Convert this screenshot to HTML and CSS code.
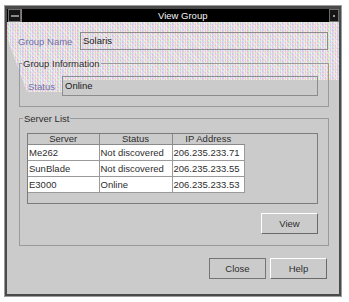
FILE: index.html
```html
<!DOCTYPE html>
<html>
<head>
<meta charset="utf-8">
<link rel="stylesheet" href="styles.css">
</head>
<body>
<div class="window">
  <div class="titlebar">
    <span class="tb-btn menu"><span class="bar"></span></span>
    <span class="sep"></span>
    <span class="title">View Group</span>
    <span class="tb-btn max"><span class="dot"></span></span>
  </div>
  <div class="client">
    <div class="noise"></div>
    <div class="row name-row">
      <label class="lbl name-lbl">Group Name</label>
      <div class="field">Solaris</div>
    </div>
    <fieldset class="box info">
      <legend>Group Information</legend>
      <div class="row status-row">
        <label class="lbl status-lbl">Status</label>
        <div class="field status">Online</div>
      </div>
    </fieldset>
    <fieldset class="box servers">
      <legend>Server List</legend>
      <div class="list">
        <table class="srv">
          <colgroup><col class="c1"><col class="c2"><col class="c3"></colgroup>
          <thead>
            <tr><th>Server</th><th>Status</th><th class="last">IP Address</th></tr>
          </thead>
          <tbody>
            <tr><td>Me262</td><td>Not discovered</td><td>206.235.233.71</td></tr>
            <tr><td>SunBlade</td><td>Not discovered</td><td>206.235.233.55</td></tr>
            <tr><td>E3000</td><td>Online</td><td>206.235.233.53</td></tr>
          </tbody>
        </table>
      </div>
      <div class="view-row"><button class="btn raised">View</button></div>
    </fieldset>
    <div class="actions">
      <button class="btn sunken">Close</button>
      <button class="btn raised">Help</button>
    </div>
  </div>
</div>
</body>
</html>
```
FILE: styles.css
```css
body {
  margin: 0;
  background: #ffffff;
  font-family: "Liberation Sans", Arial, sans-serif;
  font-size: 9.5px;
  color: #2e2e2e;
}

.window {
  margin: 5px 0 0 4px;
  width: 338px;
  height: 292px;
  box-sizing: border-box;
  background: #4a4a4a;
  padding: 4px 3px 3px 3px;
  display: flex;
  flex-direction: column;
  box-shadow: inset 0 0 0 1px #9c9c9c;
}

.titlebar {
  height: 13px;
  background: #000;
  display: flex;
  align-items: center;
  flex: none;
}

.tb-btn {
  box-sizing: border-box;
  height: 13px;
  border: 1px solid #6e6e6e;
  background: #151515;
  display: flex;
  align-items: center;
  justify-content: center;
  flex: none;
}

.menu {
  width: 13px;
  margin-left: 1px;
}

.menu .bar {
  width: 8px;
  height: 2px;
  background: #8a8a8a;
}

.sep {
  width: 1px;
  height: 13px;
  background: repeating-linear-gradient(0deg, #7a6aa0 0 1px, #a09060 1px 2px);
}

.max {
  width: 10px;
}

.max .dot {
  width: 2px;
  height: 2px;
  background: #9a9a9a;
}

.title {
  flex: 1;
  color: #f4f4f4;
  font-size: 9.5px;
  line-height: 13px;
  padding-left: 136px;
  white-space: nowrap;
}

.client {
  flex: 1;
  background: #cbcbcb;
  position: relative;
  display: flex;
  flex-direction: column;
}

.noise {
  position: absolute;
  left: 0;
  top: 0;
  width: 332px;
  height: 72px;
  clip-path: polygon(0 0, 332px 0, 332px 58px, 55px 58px, 55px 70px, 20px 70px, 0 16px);
  background:
    repeating-linear-gradient(45deg, rgba(255,255,255,.35) 0 1px, rgba(255,255,255,0) 1px 3px),
    repeating-linear-gradient(90deg, rgba(255,160,225,.55) 0 1px, rgba(160,230,255,.5) 1px 2px, rgba(255,255,160,.5) 2px 3px, rgba(205,185,255,.5) 3px 4px, rgba(245,245,245,.5) 4px 5px),
    repeating-linear-gradient(0deg, #e4c6de 0 1px, #cfe2e8 1px 2px, #e6e4c2 2px 3px);
  z-index: 0;
}

.row {
  display: flex;
  align-items: center;
  position: relative;
  z-index: 1;
}

.name-row {
  margin: 10px 11px 0 11px;
  height: 18px;
}

.lbl {
  flex: none;
}

.name-lbl {
  width: 62px;
  color: #7070aa;
}

.status-lbl {
  width: 34px;
  color: #7070aa;
}

.field {
  flex: 1;
  box-sizing: border-box;
  height: 18px;
  border: 1px solid #8c8c8c;
  padding-left: 2px;
  line-height: 16px;
  color: #1a1a1a;
}

.field.status {
  height: 20px;
  line-height: 18px;
}

.box {
  position: relative;
  z-index: 1;
  margin: 0 10px 0 12px;
  border: 1px solid #9a9a9a;
  min-width: 0;
}

.box legend {
  padding: 0 1px;
  margin-left: -6px;
  line-height: 11px;
}

.info {
  margin-top: 8px;
  padding: 7px 10px 10px 8px;
}

.servers {
  margin-top: 6px;
  padding: 9px 10px 11px 7px;
}

.servers legend {
  margin-left: -4px;
}

.list {
  height: 71px;
  box-sizing: border-box;
  border: 1px solid #7c7c7c;
  background: #cbcbcb;
}

.srv {
  border-collapse: collapse;
  table-layout: fixed;
  width: 216px;
}

.srv .c1 { width: 71px; }
.srv .c2 { width: 73px; }
.srv .c3 { width: 72px; }

.srv th {
  height: 10px;
  padding: 0;
  font-weight: normal;
  line-height: 10px;
  text-align: center;
  border-right: 1px solid #8a8a8a;
  border-bottom: 1px solid #8a8a8a;
  background: #cbcbcb;
}

.srv th.last {
  border-right: none;
}

.srv td {
  height: 15px;
  padding: 0 0 0 1px;
  line-height: 15px;
  background: #fff;
  border-right: 1px solid #9a9a9a;
  border-bottom: 1px solid #9a9a9a;
  white-space: nowrap;
  overflow: hidden;
}

.view-row {
  display: flex;
  justify-content: flex-end;
  margin-top: 9px;
}

.btn {
  width: 57px;
  height: 21px;
  box-sizing: border-box;
  background: #cbcbcb;
  font-family: inherit;
  font-size: 9.5px;
  color: #2e2e2e;
  padding: 0;
}

.raised {
  border: 1px solid;
  border-color: #fff #6a6a6a #6a6a6a #fff;
}

.sunken {
  border: 1px solid #757575;
}

.actions {
  display: flex;
  justify-content: flex-end;
  gap: 4px;
  margin-top: 12px;
  padding-right: 12px;
}
```
